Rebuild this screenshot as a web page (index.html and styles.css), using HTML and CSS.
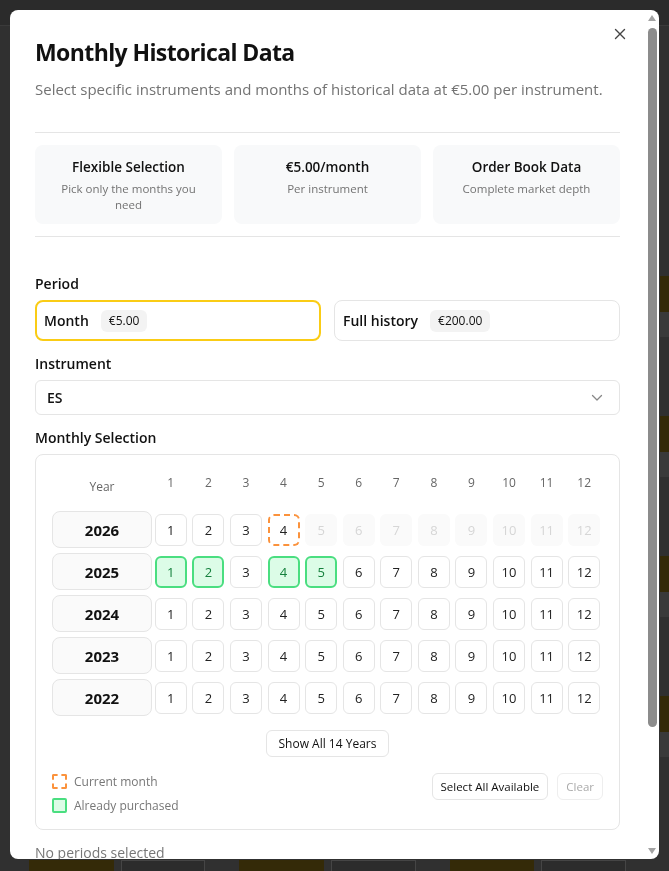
FILE: index.html
```html
<!DOCTYPE html>
<html lang="en">
<head>
    <meta charset="UTF-8">
    <meta name="viewport" content="width=device-width, initial-scale=1.0">
    <title>Monthly Historical Data</title>
    <link rel="stylesheet" href="styles.css">
</head>
<body>
    <div class="page">
        <div class="page-bar"></div>
        <div class="page-main">
            <div class="page-cards">
                <div class="card-actions">
                    <span class="pg-btn buy"></span><span class="pg-btn more"></span>
                    <span class="pg-btn buy"></span><span class="pg-btn more"></span>
                    <span class="pg-btn buy"></span><span class="pg-btn more"></span>
                </div>
            </div>
            <div class="page-side">
                <div class="side-item"><span class="pg-bar"></span><span class="pg-band"></span></div>
                <div class="side-item"><span class="pg-bar"></span><span class="pg-band"></span></div>
                <div class="side-item"><span class="pg-bar"></span><span class="pg-band"></span></div>
                <div class="side-item"><span class="pg-bar"></span><span class="pg-band"></span></div>
            </div>
        </div>
    </div>

    <div class="modal">
        <div class="modal-body">
            <button class="close-btn" aria-label="Close">
                <svg width="12" height="12" viewBox="0 0 12 12"><path d="M1.5 1.5l9 9M10.5 1.5l-9 9" stroke="#444" stroke-width="1.4" stroke-linecap="round"/></svg>
            </button>

            <h2 class="modal-title">Monthly Historical Data</h2>
            <p class="modal-desc">Select specific instruments and months of historical data at €5.00 per instrument.</p>

            <div class="features">
                <div class="feature">
                    <div class="feature-title">Flexible Selection</div>
                    <div class="feature-text">Pick only the months you need</div>
                </div>
                <div class="feature">
                    <div class="feature-title">€5.00/month</div>
                    <div class="feature-text">Per instrument</div>
                </div>
                <div class="feature">
                    <div class="feature-title">Order Book Data</div>
                    <div class="feature-text">Complete market depth</div>
                </div>
            </div>

            <div class="field-label first">Period</div>
            <div class="period-options">
                <div class="period-option active">
                    <span class="period-name">Month</span>
                    <span class="price-tag">€5.00</span>
                </div>
                <div class="period-option">
                    <span class="period-name">Full history</span>
                    <span class="price-tag">€200.00</span>
                </div>
            </div>

            <div class="field-label">Instrument</div>
            <div class="select">
                <span>ES</span>
                <svg width="12" height="8" viewBox="0 0 12 8"><path d="M1.5 1.5L6 6l4.5-4.5" fill="none" stroke="#888" stroke-width="1.3" stroke-linecap="round" stroke-linejoin="round"/></svg>
            </div>

            <div class="field-label">Monthly Selection</div>
            <div class="month-box">
                <div class="month-grid" id="monthGrid">
                    <div class="year-head">Year</div>
                </div>

                <div class="show-all">
                    <button class="btn">Show All 14 Years</button>
                </div>

                <div class="month-footer">
                    <div class="legend">
                        <div class="legend-item"><span class="swatch current"></span>Current month</div>
                        <div class="legend-item"><span class="swatch owned"></span>Already purchased</div>
                    </div>
                    <div class="month-actions">
                        <button class="btn btn-sm">Select All Available</button>
                        <button class="btn btn-sm" disabled>Clear</button>
                    </div>
                </div>
            </div>

            <div class="summary">No periods selected</div>
        </div>

        <div class="scrollbar">
            <span class="scroll-arrow up"></span>
            <div class="scroll-track"><span class="scroll-thumb"></span></div>
            <span class="scroll-arrow down"></span>
        </div>
    </div>

    <script>
        const grid = document.getElementById('monthGrid');
        const years = [2026, 2025, 2024, 2023, 2022];
        const purchased = { 2025: [1, 2, 4, 5] };
        const currentYear = 2026;
        const currentMonth = 4;

        for (let m = 1; m <= 12; m++) {
            const head = document.createElement('div');
            head.className = 'month-head';
            head.textContent = m;
            grid.appendChild(head);
        }

        years.forEach(year => {
            const yearCell = document.createElement('div');
            yearCell.className = 'year-cell';
            yearCell.textContent = year;
            grid.appendChild(yearCell);

            for (let m = 1; m <= 12; m++) {
                const cell = document.createElement('div');
                cell.className = 'month-cell';
                if (year === currentYear && m > currentMonth) cell.classList.add('future');
                if (year === currentYear && m === currentMonth) cell.classList.add('current');
                if ((purchased[year] || []).includes(m)) cell.classList.add('owned');
                cell.textContent = m;
                grid.appendChild(cell);
            }
        });
    </script>
</body>
</html>
```

FILE: styles.css
```css
html, body {
    height: 100%;
}
body {
    margin: 0;
    overflow: hidden;
    background: #303030;
    font-family: "Open Sans", "Noto Sans", Arial, sans-serif;
    color: #111;
}

/* dimmed page behind the dialog */
.page-bar {
    height: 25px;
    background: #2b2b2b;
    border-bottom: 1px solid #3a3a3a;
}
.page-main {
    display: flex;
}
.page-cards {
    width: 660px;
    flex: none;
    padding-top: 834px;
}
.card-actions {
    display: flex;
    padding-left: 29px;
}
.pg-btn {
    width: 96px;
    height: 36px;
    box-sizing: border-box;
}
.pg-btn.buy {
    background: #342a08;
}
.pg-btn.more {
    margin: 0 34px 0 7px;
    background: #2c2c2c;
    border: 1px solid #454545;
}
.page-side {
    flex: 1;
    padding-top: 250px;
}
.side-item {
    height: 140px;
}
.pg-bar {
    display: block;
    height: 36px;
    background: #342a08;
}
.pg-band {
    display: block;
    height: 25px;
    background: #3a3a3a;
}

/* dialog */
.modal {
    position: fixed;
    top: 10px;
    left: 10px;
    width: 649px;
    height: 849px;
    display: flex;
    background: white;
    border-radius: 8px;
    overflow: hidden;
}
.modal-body {
    position: relative;
    flex: 1;
    min-width: 0;
    padding: 26px 25px 0;
    overflow: hidden;
}

.scrollbar {
    width: 14px;
    flex: none;
    display: flex;
    flex-direction: column;
    align-items: center;
}
.scroll-arrow {
    height: 16px;
    width: 14px;
    display: flex;
    justify-content: center;
    align-items: center;
}
.scroll-arrow::before {
    content: "";
    border-left: 4px solid transparent;
    border-right: 4px solid transparent;
}
.scroll-arrow.up::before {
    border-bottom: 6px solid #a3a3a3;
}
.scroll-arrow.down::before {
    border-top: 6px solid #a3a3a3;
}
.scroll-track {
    flex: 1;
    width: 100%;
    padding-top: 2px;
    display: flex;
    justify-content: center;
}
.scroll-thumb {
    width: 9px;
    height: 699px;
    background: #8c8c8c;
    border-radius: 5px;
}

.close-btn {
    position: absolute;
    top: 12px;
    right: 13px;
    width: 24px;
    height: 24px;
    padding: 0;
    border: none;
    background: none;
    display: flex;
    align-items: center;
    justify-content: center;
    cursor: pointer;
}

.modal-title {
    margin: 0;
    font-size: 23px;
    line-height: 32px;
    font-weight: 700;
    letter-spacing: -0.6px;
}
.modal-desc {
    margin: 9px 0 0;
    font-size: 15px;
    line-height: 24px;
    color: #737373;
}

.features {
    display: grid;
    grid-template-columns: repeat(3, 1fr);
    gap: 12px;
    margin-top: 31px;
    padding: 12px 0;
    border-top: 1px solid #e5e5e5;
    border-bottom: 1px solid #e5e5e5;
}
.feature {
    height: 79px;
    box-sizing: border-box;
    padding: 12px 22px 0;
    background: #f8f9fa;
    border-radius: 8px;
    text-align: center;
}
.feature-title {
    font-size: 13.5px;
    line-height: 20px;
    font-weight: 600;
}
.feature-text {
    margin-top: 4px;
    font-size: 11.5px;
    line-height: 16px;
    color: #737373;
}

.field-label {
    margin: 13px 0 6px;
    font-size: 14px;
    line-height: 20px;
    font-weight: 600;
}
.field-label.first {
    margin-top: 37px;
}

.period-options {
    display: grid;
    grid-template-columns: 1fr 1fr;
    gap: 13px;
}
.period-option {
    display: flex;
    align-items: center;
    gap: 12px;
    height: 41px;
    box-sizing: border-box;
    padding: 0 8px;
    border: 1px solid #e5e5e5;
    border-radius: 8px;
}
.period-option.active {
    padding: 0 7px;
    border: 2px solid #facc15;
}
.period-name {
    font-size: 14px;
    font-weight: 600;
}
.price-tag {
    padding: 2px 8px;
    background: #f3f3f3;
    border-radius: 6px;
    font-size: 12px;
    line-height: 18px;
}

.select {
    display: flex;
    align-items: center;
    justify-content: space-between;
    height: 35px;
    box-sizing: border-box;
    padding: 0 16px 0 11px;
    border: 1px solid #e5e5e5;
    border-radius: 6px;
    font-size: 14px;
    font-weight: 600;
}

.month-box {
    padding: 15px 16px 16px;
    border: 1px solid #e5e5e5;
    border-radius: 8px;
}
.month-grid {
    display: grid;
    grid-template-columns: 100px repeat(12, 1fr);
    grid-template-rows: 36px;
    grid-auto-rows: 37px;
    row-gap: 5px;
    align-items: center;
    justify-items: center;
}
.month-head,
.year-head {
    align-self: start;
    font-size: 12px;
    line-height: 18px;
    color: #666;
}
.month-head {
    padding-top: 4px;
}
.year-head {
    padding-top: 8px;
}
.year-cell {
    justify-self: stretch;
    align-self: stretch;
    display: flex;
    align-items: center;
    justify-content: center;
    background: #fafafa;
    border: 1px solid #e5e5e5;
    border-radius: 8px;
    font-size: 15px;
    font-weight: 700;
}
.month-cell {
    width: 32px;
    height: 32px;
    box-sizing: border-box;
    display: flex;
    align-items: center;
    justify-content: center;
    background: white;
    border: 1px solid #e5e5e5;
    border-radius: 6px;
    font-size: 13px;
    color: #222;
}
.month-cell.owned {
    background: #dcfce7;
    border: 2px solid #4ade80;
    color: #15803d;
}
.month-cell.current {
    border: 2px dashed #fb923c;
}
.month-cell.future {
    background: #fafafa;
    border-color: transparent;
    color: #d6d6d6;
}

.btn {
    height: 27px;
    padding: 0 12px;
    background: white;
    border: 1px solid #e5e5e5;
    border-radius: 6px;
    font-family: inherit;
    font-size: 12px;
    font-weight: 500;
    color: #111;
    cursor: pointer;
}
.btn:disabled {
    color: #aaa;
    border-color: #eee;
    cursor: not-allowed;
}
.btn-sm {
    font-size: 11.5px;
    padding: 0 8px;
}

.show-all {
    display: flex;
    justify-content: center;
    margin-top: 14px;
}

.month-footer {
    display: flex;
    justify-content: space-between;
    align-items: flex-start;
    margin-top: 16px;
}
.legend {
    display: flex;
    flex-direction: column;
    gap: 8px;
}
.legend-item {
    display: flex;
    align-items: center;
    gap: 7px;
    height: 16px;
    font-size: 12px;
    color: #777;
}
.swatch {
    width: 15px;
    height: 15px;
    box-sizing: border-box;
    border-radius: 2px;
}
.swatch.current {
    border: 2px dashed #fb923c;
}
.swatch.owned {
    background: #dcfce7;
    border: 2px solid #4ade80;
}
.month-actions {
    display: flex;
    gap: 9px;
}

.summary {
    margin-top: 13px;
    font-size: 14px;
    line-height: 20px;
    color: #777;
}
```
